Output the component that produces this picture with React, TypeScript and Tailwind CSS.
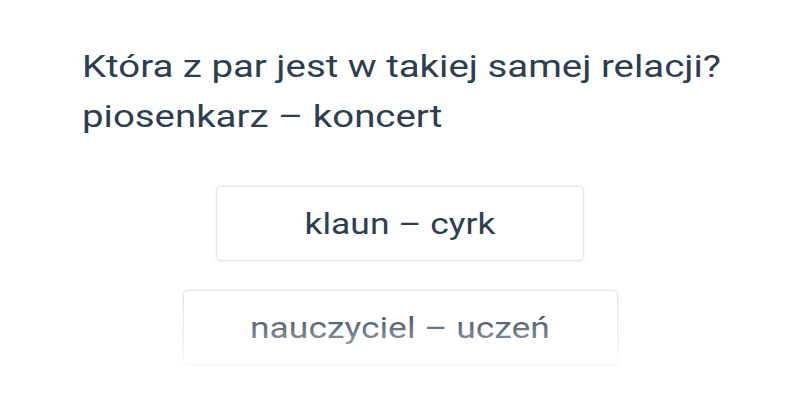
const options = [
  { label: "klaun – cyrk", width: "w-[368px]" },
  { label: "nauczyciel – uczeń", width: "w-[435px]" },
];

export default function App() {
  return (
    <div className="w-[800px] h-[400px] overflow-hidden bg-white">
      {/* page is laid out at 800x480 and squeezed to fit the 400px viewport */}
      <div className="relative w-[800px] h-[480px] origin-top scale-y-[0.8333] text-[#2c3e50] font-['Roboto',sans-serif]">
        <div className="pl-[82px] pt-[50px]">
          <h1 className="text-[38.4px] leading-[60px] font-normal">
            Która z par jest w takiej samej relacji?
            <br />
            piosenkarz – koncert
          </h1>
        </div>
        <div className="mt-[53px] flex flex-col items-center gap-[35px]">
          {options.map((o) => (
            <button
              key={o.label}
              className={`${o.width} h-[90px] pt-[4px] rounded-md border border-[#e2e2e2] bg-white text-[35.4px] text-[#2c3e50] shadow-[0_1px_4px_rgba(0,0,0,0.08)]`}
            >
              {o.label}
            </button>
          ))}
        </div>
        {/* list fades out under the fold */}
        <div className="pointer-events-none absolute left-0 right-0 top-[366px] h-[90px] bg-gradient-to-b from-white/0 to-white/90" />
        <div className="pointer-events-none absolute left-0 right-0 top-[456px] bottom-0 bg-white" />
      </div>
    </div>
  );
}
